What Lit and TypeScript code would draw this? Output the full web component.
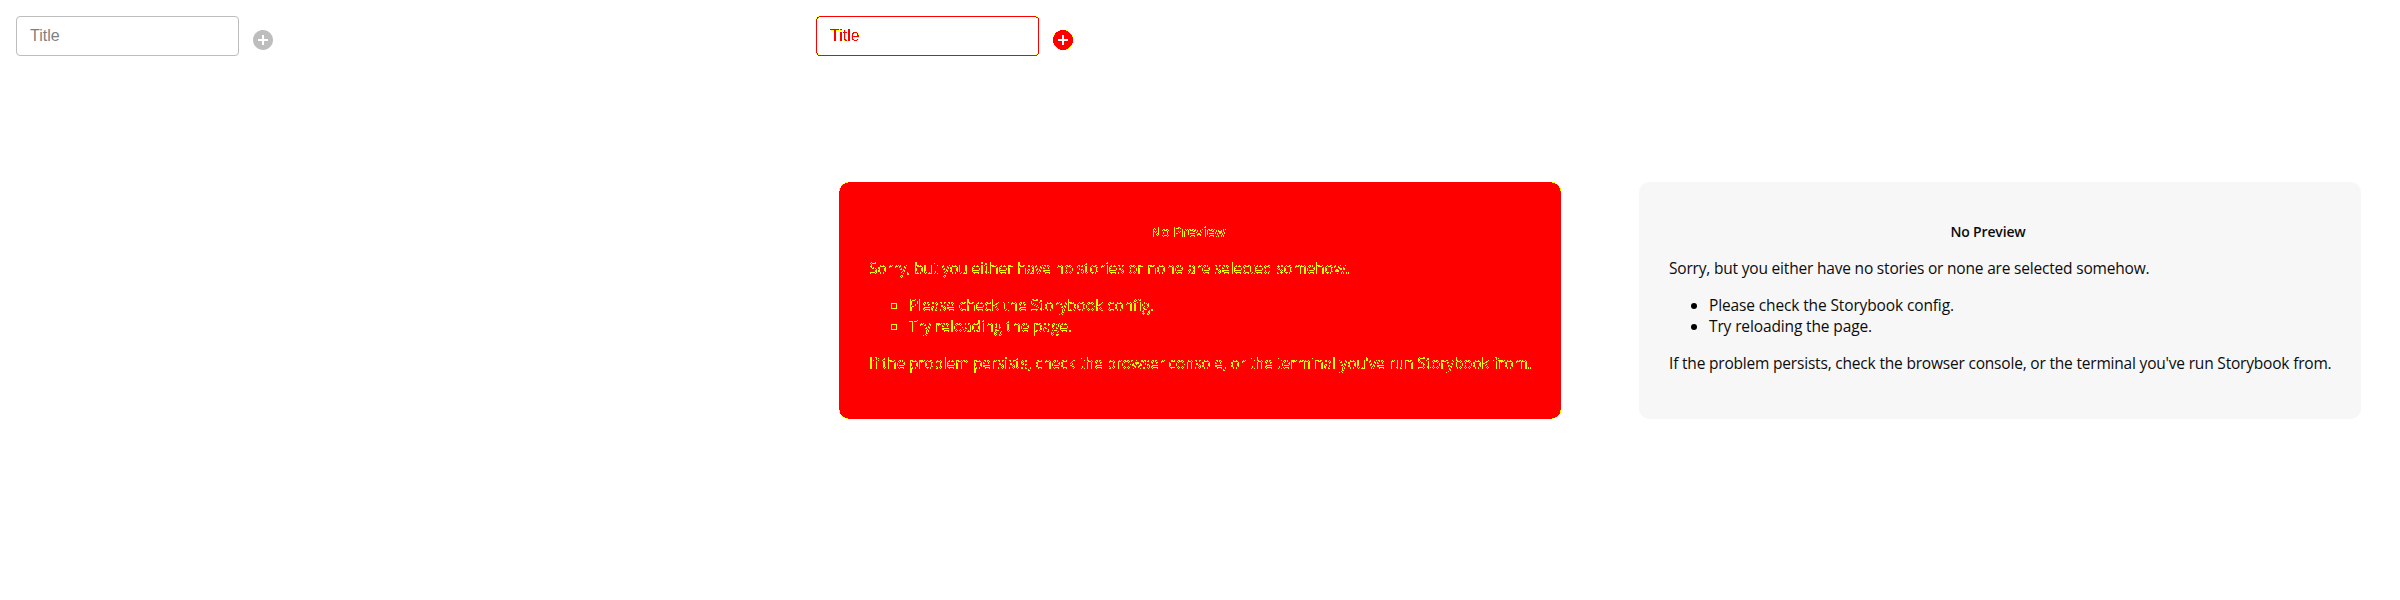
import { LitElement, html, css, svg } from "lit";
import { customElement, property } from "lit/decorators.js";

const addCircle = svg`<path d="M12 2C6.48 2 2 6.48 2 12s4.48 10 10 10 10-4.48 10-10S17.52 2 12 2zm5 11h-4v4h-2v-4H7v-2h4V7h2v4h4v2z"/>`;

// Solid pixels turn red, partially covered edge pixels turn yellow.
const edgeFilter = (yellowSteps: string) => html`<svg class="defs" width="0" height="0" aria-hidden="true">
  <filter id="edges" x="-5%" y="-5%" width="110%" height="110%" color-interpolation-filters="sRGB">
    <feColorMatrix type="matrix" values="0 0 0 0 1  0 0 0 1 0  0 0 0 0 0  0 0 0 1 0" />
    <feComponentTransfer>
      <feFuncG type="discrete" tableValues=${yellowSteps} />
      <feFuncA type="discrete" tableValues="0 0 1 1 1 1 1 1 1 1" />
    </feComponentTransfer>
  </filter>
</svg>`;

@customElement("title-field")
export class TitleField extends LitElement {
  @property({ type: Boolean, reflect: true }) diff = false;
  static styles = css`
    :host { display: block; }
    .defs { position: absolute; }
    .row { display: flex; align-items: flex-start; padding: 16px; }
    .field {
      box-sizing: border-box; width: 223px; height: 40px; padding: 0 13px 1px;
      border: 1px solid #bdbdbd; border-radius: 4px;
      display: flex; align-items: center;
      font: 16px/23px "Liberation Sans", Arial, sans-serif; color: #808080;
    }
    .icon { width: 24px; height: 24px; margin: 12px 0 0 12px; fill: #bdbdbd; }
    :host([diff]) .row { filter: url(#edges); }
    :host([diff]) .field { color: rgba(0, 0, 0, 0.85); border-color: #000; }
    :host([diff]) .icon { fill: #000; }
  `;
  render() {
    return html`${this.diff ? edgeFilter("1 1 1 1 1 0 0 0 0 0") : null}
      <div class="row">
        <div class="field">Title</div>
        <svg class="icon" viewBox="0 0 24 24">${addCircle}</svg>
      </div>`;
  }
}

@customElement("no-preview")
export class NoPreview extends LitElement {
  @property({ type: Boolean, reflect: true }) diff = false;
  static styles = css`
    :host { display: block; }
    .defs { position: absolute; }
    .card {
      position: relative; box-sizing: border-box; width: 722px; height: 237px;
      padding: 40px 30px 0;
    }
    .card::before {
      content: ""; position: absolute; inset: 0; border-radius: 10px; background: #f7f7f7;
    }
    .content {
      position: relative; color: #0c0c0c; white-space: nowrap;
      font: 15.5px/21px "Open Sans", "Noto Sans", sans-serif;
      letter-spacing: -0.192px;
    }
    h1 {
      margin: 0 24px 0 0; font-size: 14px; line-height: 20px; font-weight: 600;
      text-align: center; letter-spacing: -0.15px;
    }
    p { margin: 16px 0 16px; }
    ul { margin: 0; padding: 0 0 0 40px; list-style: none; letter-spacing: -0.13px; }
    li { display: flex; align-items: center; }
    li::before {
      content: ""; box-sizing: border-box; width: 6px; height: 6px; margin: 1px 12px 0 -18px;
      border-radius: 50%; background: #000;
    }
    p.last { margin: 16px 0 0; }
    :host([diff]) .card::before { background: #000; filter: url(#edges); }
    :host([diff]) .content { color: #000; filter: url(#edges); }
    :host([diff]) li::before { background: none; border: 1px solid rgba(0, 0, 0, 0.5); border-radius: 0; }
  `;
  render() {
    return html`${this.diff ? edgeFilter("1 1 1 1 1 1 1 1 0 0") : null}
      <div class="card">
        <div class="content">
          <h1>No Preview</h1>
          <p>Sorry, but you either have no stories or none are selected somehow.</p>
          <ul>
            <li>Please check the Storybook config.</li>
            <li>Try reloading the page.</li>
          </ul>
          <p class="last">If the problem persists, check the browser console, or the terminal you've run Storybook from.</p>
        </div>
      </div>`;
  }
}

@customElement("app-root")
export class AppRoot extends LitElement {
  static styles = css`
    :host { display: grid; grid-template-columns: repeat(3, 800px); height: 600px; background: #fff; }
    .pane { display: grid; }
    .pane > * { grid-area: 1 / 1; }
    no-preview { place-self: center; }
  `;
  render() {
    return html`
      <section class="pane"><title-field></title-field></section>
      <section class="pane"><title-field diff></title-field><no-preview diff></no-preview></section>
      <section class="pane"><no-preview></no-preview></section>
    `;
  }
}
